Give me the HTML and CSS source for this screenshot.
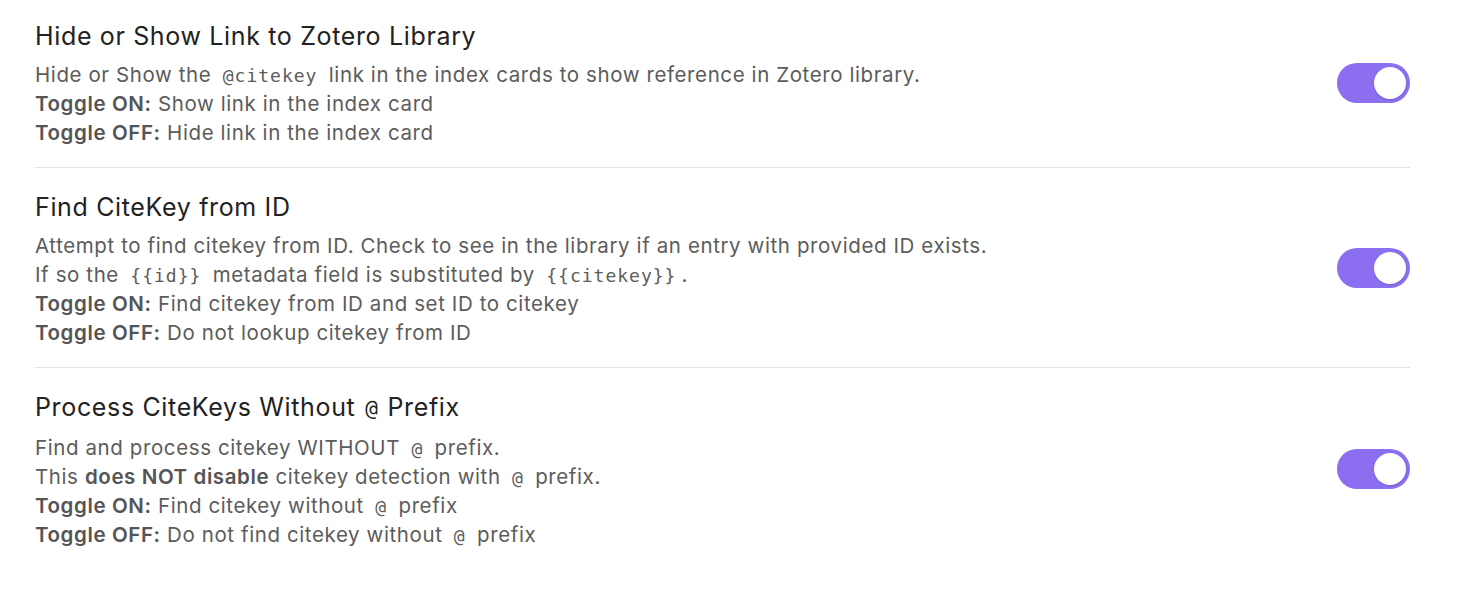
FILE: index.html
```html
<!DOCTYPE html>
<html>
<head>
<meta charset="utf-8">
<link rel="stylesheet" href="styles.css">
</head>
<body>
<div class="settings">
  <div class="item first">
    <div class="info">
      <div class="name">Hide or Show Link to Zotero Library</div>
      <div class="desc">
        <div>Hide or Show the <code>@citekey</code> link in the index cards to show reference in Zotero library.</div>
        <div><b>Toggle ON:</b> Show link in the index card</div>
        <div><b>Toggle OFF:</b> Hide link in the index card</div>
      </div>
    </div>
    <div class="toggle"><div class="knob"></div></div>
  </div>
  <div class="item">
    <div class="info">
      <div class="name">Find CiteKey from ID</div>
      <div class="desc">
        <div>Attempt to find citekey from ID. Check to see in the library if an entry with provided ID exists.</div>
        <div>If so the <code>{{id}}</code> metadata field is substituted by <code>{{citekey}}</code>.</div>
        <div><b>Toggle ON:</b> Find citekey from ID and set ID to citekey</div>
        <div><b>Toggle OFF:</b> Do not lookup citekey from ID</div>
      </div>
    </div>
    <div class="toggle"><div class="knob"></div></div>
  </div>
  <div class="item">
    <div class="info">
      <div class="name with-code">Process CiteKeys Without <code class="t">@</code> Prefix</div>
      <div class="desc">
        <div>Find and process citekey WITHOUT <code>@</code> prefix.</div>
        <div>This <b>does NOT disable</b> citekey detection with <code>@</code> prefix.</div>
        <div><b>Toggle ON:</b> Find citekey without <code>@</code> prefix</div>
        <div><b>Toggle OFF:</b> Do not find citekey without <code>@</code> prefix</div>
      </div>
    </div>
    <div class="toggle"><div class="knob"></div></div>
  </div>
</div>
</body>
</html>
```
FILE: styles.css
```css
html, body {
  margin: 0;
  padding: 0;
  background: #ffffff;
}
body {
  font-family: Inter, "Liberation Sans", sans-serif;
}
.settings {
  width: 1375px;
  margin-left: 35px;
  padding-top: 0;
}
.item {
  display: flex;
  align-items: center;
  justify-content: space-between;
  padding: 24px 0 20px;
  border-top: 1px solid #e3e3e3;
}
.item.first {
  border-top: none;
  padding-top: 21px;
}
.info {
  display: flex;
  flex-direction: column;
  gap: 10px;
}
.name {
  font-size: 25px;
  line-height: 30px;
  color: #222222;
  letter-spacing: 0.65px;
}
.name.with-code {
  padding-bottom: 2px;
}
.desc {
  font-size: 20.5px;
  line-height: 28.75px;
  color: #5c5c5c;
  letter-spacing: 0.6px;
}
.desc > div {
  height: 28.75px;
}
.desc b {
  font-weight: 600;
  color: #555555;
}
code {
  font-family: "DejaVu Sans Mono", monospace;
  font-size: 18px;
  line-height: 1;
  padding: 0 5px;
  letter-spacing: 1px;
}
code.t {
  font-size: 21px;
  padding: 0 2px;
  letter-spacing: 0;
}
.toggle {
  width: 73px;
  height: 40px;
  border-radius: 20px;
  background: #8c6ef0;
  display: flex;
  align-items: center;
  justify-content: flex-end;
  padding: 0 4px;
  margin-bottom: 3px;
  box-sizing: border-box;
  flex-shrink: 0;
}
.knob {
  width: 32px;
  height: 32px;
  border-radius: 50%;
  background: #ffffff;
  box-shadow: 0 1px 2px rgba(0,0,0,0.15);
}
```
